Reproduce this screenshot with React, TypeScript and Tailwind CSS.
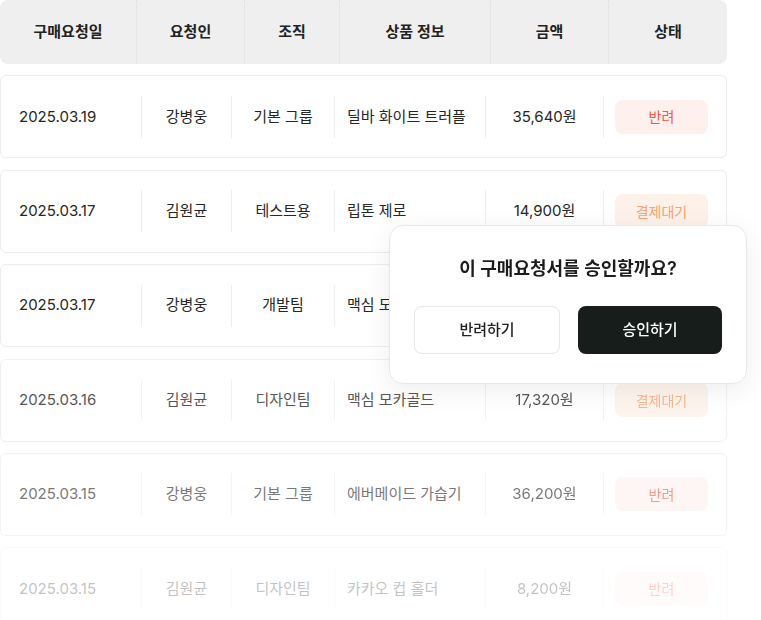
import React from "react";

type Status = "rejected" | "pending";

interface Row {
  date: string;
  name: string;
  org: string;
  product: string;
  amount: string;
  status: Status;
  fade: string;
}

const ROWS: Row[] = [
  { date: "2025.03.19", name: "강병웅", org: "기본 그룹", product: "딜바 화이트 트러플", amount: "35,640원", status: "rejected", fade: "opacity-100" },
  { date: "2025.03.17", name: "김원균", org: "테스트용", product: "립톤 제로", amount: "14,900원", status: "pending", fade: "opacity-100" },
  { date: "2025.03.17", name: "강병웅", org: "개발팀", product: "맥심 모카골드", amount: "17,320원", status: "pending", fade: "opacity-100" },
  { date: "2025.03.16", name: "김원균", org: "디자인팀", product: "맥심 모카골드", amount: "17,320원", status: "pending", fade: "opacity-[0.78]" },
  { date: "2025.03.15", name: "강병웅", org: "기본 그룹", product: "에버메이드 가습기", amount: "36,200원", status: "rejected", fade: "opacity-[0.62]" },
  { date: "2025.03.15", name: "김원균", org: "디자인팀", product: "카카오 컵 홀더", amount: "8,200원", status: "rejected", fade: "opacity-[0.28]" },
];

const HEADERS = [
  { label: "구매요청일", w: "w-[137px]" },
  { label: "요청인", w: "w-[108px]" },
  { label: "조직", w: "w-[95px]" },
  { label: "상품 정보", w: "w-[151px]" },
  { label: "금액", w: "w-[118px]" },
  { label: "상태", w: "w-[118px]" },
];

function Divider() {
  return <div className="w-px h-[42px] bg-[#eeeeee] shrink-0" />;
}

function StatusBadge({ status }: { status: Status }) {
  if (status === "rejected") {
    return (
      <div className="w-[93px] h-[34px] rounded-lg bg-[#fdf0ed] text-[#f25a4c] text-[14px] flex items-center justify-center">
        반려
      </div>
    );
  }
  return (
    <div className="w-[93px] h-[34px] rounded-lg bg-[#fdf1ea] text-[#f5a36f] text-[14px] flex items-center justify-center">
      결제대기
    </div>
  );
}

function TableRow({ row }: { row: Row }) {
  return (
    <div
      className={`h-[83px] w-[727px] rounded-md border border-[#ececec] bg-white flex items-center text-[15px] text-[#262626] ${row.fade}`}
    >
      <div className="w-[140px] pl-[18px] shrink-0">{row.date}</div>
      <Divider />
      <div className="w-[89px] text-center shrink-0">{row.name}</div>
      <Divider />
      <div className="w-[102px] text-center shrink-0">{row.org}</div>
      <Divider />
      <div className="w-[150px] pl-[12px] shrink-0 truncate">{row.product}</div>
      <Divider />
      <div className="w-[117px] text-center shrink-0">{row.amount}</div>
      <Divider />
      <div className="flex-1 pl-[11px]">
        <StatusBadge status={row.status} />
      </div>
    </div>
  );
}

export default function App() {
  return (
    <div
      className="relative w-[761px] h-[620px] bg-white overflow-hidden"
      style={{ fontFamily: '"Inter", "Noto Sans CJK KR", sans-serif' }}
    >
      <div className="w-[727px] flex flex-col gap-[11.4px]">
        {/* Header */}
        <div className="h-[64px] rounded-lg bg-[#efefef] flex items-center">
          {HEADERS.map((h, i) => (
            <div
              key={h.label}
              className={`${h.w} h-full flex items-center justify-center text-[15px] font-semibold text-[#222222] ${
                i < HEADERS.length - 1 ? "border-r border-dotted border-[#dedede]" : ""
              }`}
            >
              {h.label}
            </div>
          ))}
        </div>

        {/* Rows */}
        {ROWS.map((row, idx) => (
          <TableRow key={idx} row={row} />
        ))}
      </div>

      {/* Confirm popover */}
      <div className="absolute left-[389px] top-[225px] w-[358px] h-[159px] rounded-[14px] border border-[#e8e8e8] bg-white shadow-[0_6px_28px_rgba(0,0,0,0.07)] flex flex-col items-center pt-[31px] px-[24px]">
        <div className="text-[18px] font-semibold text-[#1c1c1c] leading-[24px]">
          이 구매요청서를 승인할까요?
        </div>
        <div className="mt-[25px] flex gap-[18px] w-full">
          <button
            type="button"
            className="flex-1 h-[48px] rounded-lg border border-[#e6e6e6] bg-white text-[15px] font-medium text-[#222222]"
          >
            반려하기
          </button>
          <button
            type="button"
            className="flex-1 h-[48px] rounded-lg bg-[#171d1b] text-[15px] font-medium text-white"
          >
            승인하기
          </button>
        </div>
      </div>
    </div>
  );
}
